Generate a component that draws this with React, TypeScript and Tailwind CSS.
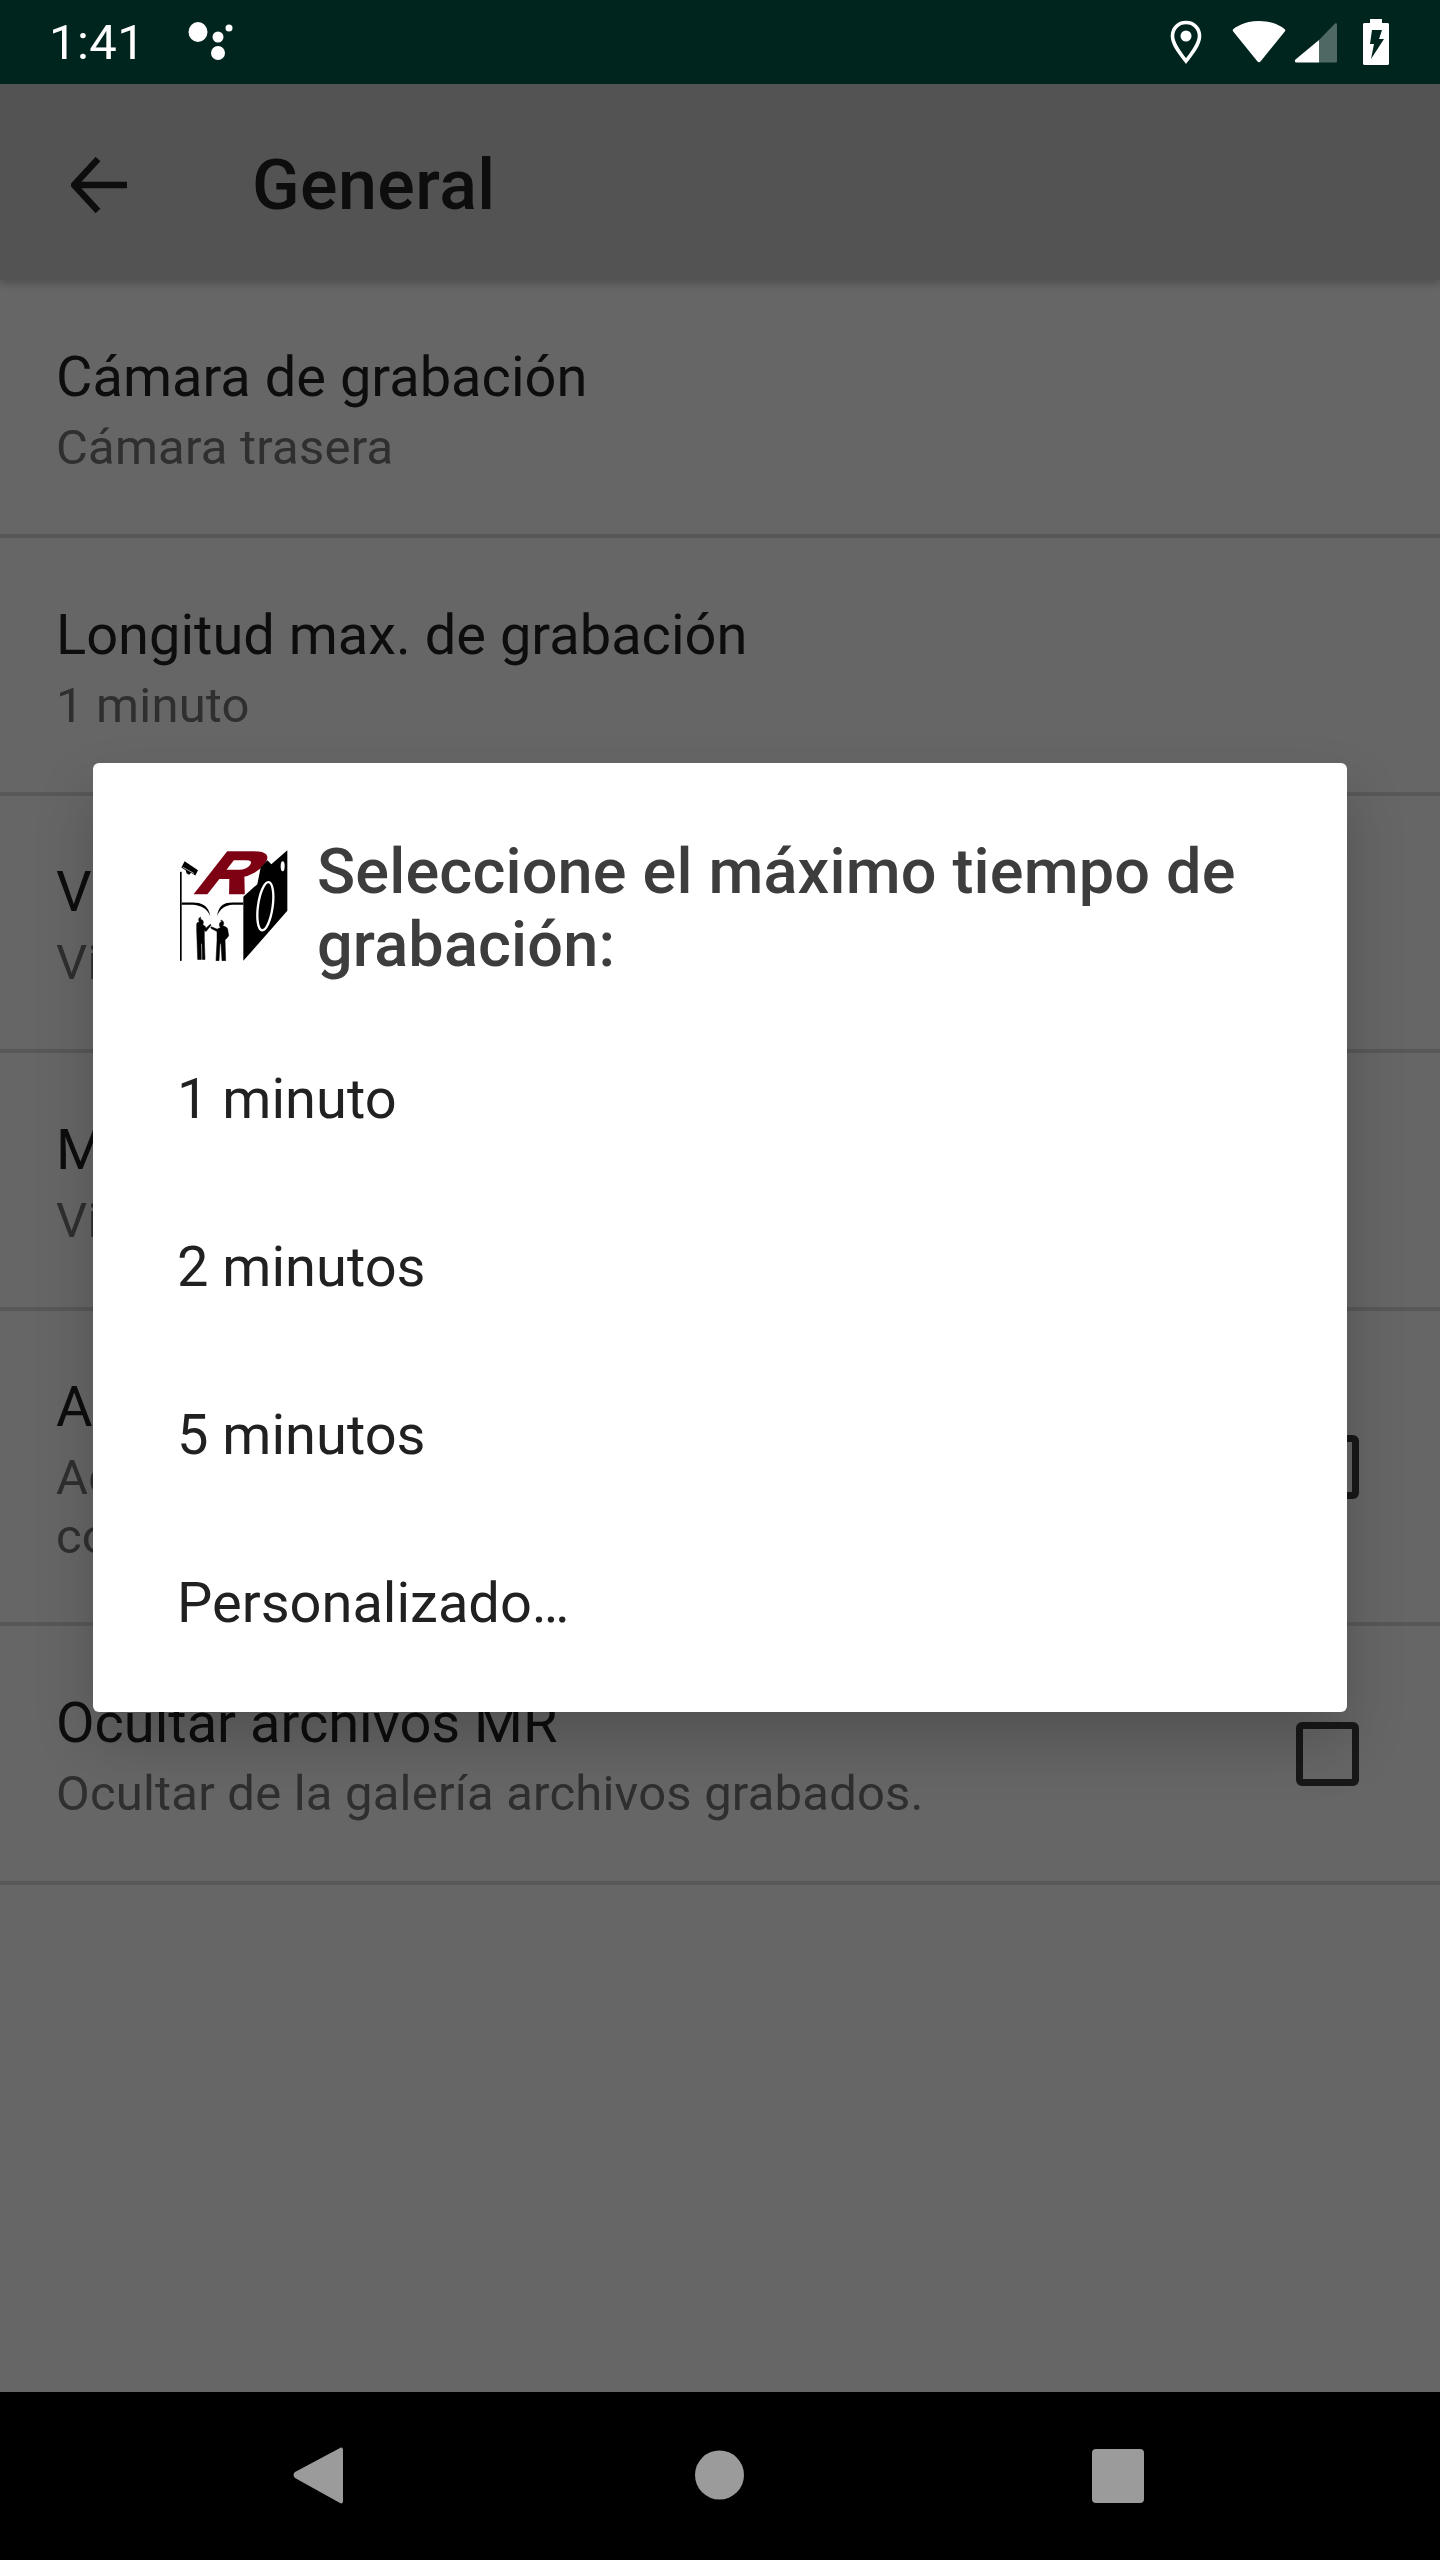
const font = "font-['Roboto','Noto_Sans',sans-serif]";

const rows = [
  { title: "Cámara de grabación", summary: ["Cámara trasera"], height: "h-[258px]" },
  { title: "Longitud max. de grabación", summary: ["1 minuto"], height: "h-[258px]" },
  { title: "Velocidad de grabación", summary: ["Video de alta calidad"], height: "h-[257px]" },
  { title: "Modo de grabación", summary: ["Video y audio"], height: "h-[258px]" },
  {
    title: "Activar sonido de inicio",
    summary: ["Activa un sonido al iniciar la grabación", "con el botón de volumen"],
    height: "h-[315px]",
    check: true,
  },
  { title: "Ocultar archivos MR", summary: ["Ocultar de la galería archivos grabados."], height: "h-[259px]", check: true },
];

const options = ["1 minuto", "2 minutos", "5 minutos", "Personalizado…"];

function StatusIcons() {
  return (
    <div className="flex items-center">
      <svg width="32" height="44" viewBox="0 0 32 44" className="mr-[30px]">
        <path d="M16 2.500C8 2.500 2.500 8.500 2.500 16c0 8.500 8 18 13.500 25 5.500-7 13.500-16.500 13.500-25C29.500 8.500 24 2.500 16 2.500Z" fill="none" stroke="#fff" strokeWidth="3.600" />
        <circle cx="16" cy="16" r="5.500" fill="#fff" />
      </svg>
      <svg width="54" height="44" viewBox="0 0 54 44" className="mr-[8px]">
        <path d="M1 9.500C2 8 12 1 27 1s25 7 26 8.500c.400.800.300 1.300-.200 2L28.500 41.500c-.800 1-2.200 1-3 0L1.200 11.500c-.500-.700-.600-1.200-.200-2Z" fill="#fff" />
      </svg>
      <svg width="44" height="44" viewBox="0 0 44 44" className="mr-[25px]">
        <path d="M25 20 41 3.500c.700-.700 2-.200 2 1V41c0 1-.500 1.500-1.500 1.500H25Z" fill="#4f6864" />
        <path d="M25 20 1.500 39.500C.300 41 .800 42.500 2.500 42.500H25Z" fill="#fff" />
      </svg>
      <svg width="26" height="46" viewBox="0 0 26 46">
        <path d="M7 0h12v4h5.500c.800 0 1.500.700 1.500 1.500v39c0 .800-.700 1.500-1.500 1.500h-23C.700 46 0 45.300 0 44.500v-39C0 4.700.700 4 1.500 4H7Z" fill="#fff" />
        <path d="M9 11h10l-3 9h5L8 40l3-15H7Z" fill="#00251f" />
      </svg>
    </div>
  );
}

function Logo() {
  return (
    <svg width="108" height="111" viewBox="88 120 324 332" className="ml-[3px] mt-[15px] shrink-0">
      <rect x="88" y="185" width="5" height="267" fill="#000" />
      <path d="M92 172 102 153 142 180 134 196 121 188 116 194 108 190 105 180Z" fill="#000" />
      <path d="M96 171 130 190" stroke="#fff" strokeWidth="2" />
      <text
        x="0"
        y="0"
        transform="translate(122 248) skewX(-38) scale(1.2 0.96)"
        fontFamily="'Liberation Sans', sans-serif"
        fontWeight="700"
        fontSize="184"
        fill="#7d0013"
        stroke="#7d0013"
        strokeWidth="8"
      >
        R
      </text>
      <path d="M278 260 320 222 330 172 350 150 362 162 410 120V302L278 452Z" fill="#000" />
      <ellipse cx="344" cy="288" rx="22" ry="73" transform="rotate(8 344 288)" fill="none" stroke="#fff" strokeWidth="7" />
      <ellipse cx="396" cy="168" rx="6" ry="15" fill="#fff" />
      <path d="M93 277H125C152 277 174 285 179 318 170 296 150 285 125 284H93Z" fill="#000" />
      <path d="M278 277H245C220 277 204 285 199 318 208 296 225 285 245 284H278Z" fill="#000" />
      <path d="M150 328c5 0 8 3 8 9 0 3-1 5-2 7 5 2 8 4 10 10l13-12 2 3-15 19-5-4 0 25 2 63h-8l-1-48h-3l1 48h-11l-2-60-1-26 0-20c0-5 5-5 8-7-1-2-2-3-2-6 0-5 3-7 6-8Z" fill="#000" stroke="#000" strokeWidth="1.500" />
      <path d="M210 330c6 0 9 4 9 10 0 3-1 5-3 7 7 2 13 4 15 10l3 20-8 10-3 0 2 65h-11l-3-52h-3l-3 52h-9l3-60 0-28-16-8-3-3 2-3 18 7c2-3 8-3 9-5-2-3-3-5-3-8 0-6 4-10 8-10Z" fill="#000" stroke="#000" strokeWidth="1.500" />
    </svg>
  );
}

export default function App() {
  return (
    <div className={`${font} flex h-[2560px] w-[1440px] flex-col overflow-hidden bg-white`}>
      <div className="flex h-[84px] shrink-0 items-center justify-between bg-[#00251f] pl-[49px] pr-[51px] text-white">
        <div className="flex items-center">
          <span className="text-[49px] leading-none tracking-[0.4px]">1:41</span>
          <svg width="46" height="40" viewBox="0 0 46 40" className="ml-[43px]">
            <ellipse cx="10" cy="10" rx="9.500" ry="10" fill="#fff" />
            <circle cx="30" cy="15" r="5.500" fill="#fff" />
            <circle cx="41" cy="6" r="3.500" fill="#fff" />
            <circle cx="30" cy="31" r="7" fill="#fff" />
          </svg>
        </div>
        <StatusIcons />
      </div>

      <div className="relative flex-1">
        <header className="relative z-10 flex h-[196px] items-center bg-[#cfcfcf] pl-[71px] pt-[6px] shadow-[0_3px_8px_rgba(0,0,0,0.25)]">
          <svg width="56" height="56" viewBox="0 0 56 56" className="mr-[125px]">
            <path d="M56 28H5M27 2 3 28l24 26" fill="none" stroke="#212121" strokeWidth="6.500" />
          </svg>
          <h1 className="text-[70px] font-medium leading-none tracking-[0.4px] text-[#212121]">General</h1>
        </header>

        <div>
          {rows.map((row) => (
            <div key={row.title} className={`${row.height} flex items-center justify-between border-b-4 border-[#dcdcdc] pl-[56px] pr-[81px] pt-[4px]`}>
              <div>
                <div className="text-[56px] leading-[70px] text-[#212121]">{row.title}</div>
                <div className="mt-[6px]">
                  {row.summary.map((line) => (
                    <div key={line} className="text-[49px] leading-[59px] tracking-[0.2px] text-[#757575]">
                      {line}
                    </div>
                  ))}
                </div>
              </div>
              {row.check && <div className="-mt-[4px] h-[64px] w-[63px] rounded-[6px] border-[7px] border-[#3e3e3e]" />}
            </div>
          ))}
        </div>

        <div className="absolute inset-0 z-20 bg-black/60" />

        <div className="absolute left-[93px] top-[679px] z-30 h-[949px] w-[1254px] rounded-[6px] bg-white pl-[84px] pr-[85px] pt-[72px] shadow-[0_30px_60px_rgba(0,0,0,0.2)]">
          <div className="flex items-start">
            <Logo />
            <h2 className="ml-[29px] text-[63px] font-medium leading-[73px] tracking-[0.16px] text-[#3d3d3d]">Seleccione el máximo tiempo de grabación:</h2>
          </div>
          <div className="mt-[34px]">
            {options.map((option) => (
              <div key={option} className="flex h-[168px] items-center text-[56px] text-[#212121]">
                {option}
              </div>
            ))}
          </div>
        </div>
      </div>

      <div className="flex h-[168px] shrink-0 items-center bg-black">
        <svg width="1440" height="168" viewBox="0 0 1440 168">
          <path d="M340 56 295 80c-2 2-2 4 0 6l45 25c2 1 3 0 3-2V58c0-2-1-3-3-2Z" fill="#9b9b9b" />
          <circle cx="719.500" cy="83" r="24.500" fill="#9b9b9b" />
          <rect x="1092" y="57" width="52" height="54" rx="4" fill="#9b9b9b" />
        </svg>
      </div>
    </div>
  );
}
